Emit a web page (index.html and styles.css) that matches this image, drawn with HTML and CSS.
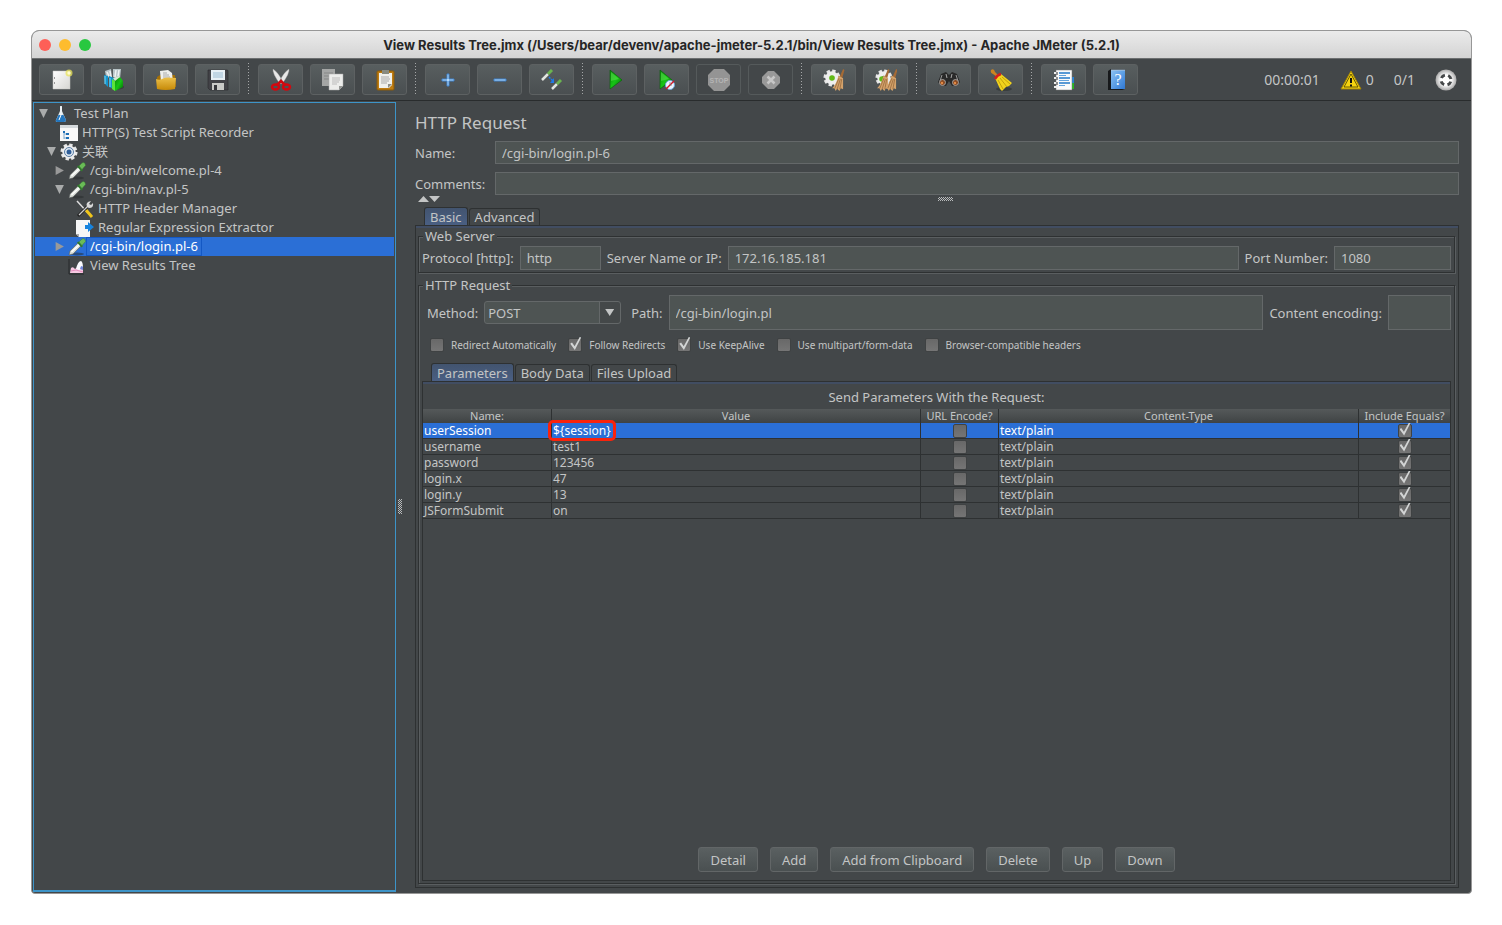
FILE: index.html
```html
<!DOCTYPE html>
<html lang="en">
<head>
    <meta charset="UTF-8">
    <meta name="viewport" content="width=device-width, initial-scale=1.0">
    <title>Apache JMeter</title>
    <link rel="stylesheet" href="styles.css">
</head>
<body>
    <!-- gradients and shapes shared by the icons -->
    <svg class="defs" width="0" height="0" aria-hidden="true">
        <defs>
            <linearGradient id="paper" x1="0" y1="0" x2="1" y2="1"><stop offset="0" stop-color="#fff"/><stop offset="1" stop-color="#d6d6d2"/></linearGradient>
            <linearGradient id="gold" x1="0" y1="0" x2="0" y2="1"><stop offset="0" stop-color="#ecc04a"/><stop offset="1" stop-color="#c68a08"/></linearGradient>
            <linearGradient id="green" x1="0" y1="0" x2="1" y2="1"><stop offset="0" stop-color="#0a8a0a"/><stop offset=".5" stop-color="#16c416"/><stop offset="1" stop-color="#066b06"/></linearGradient>
            <linearGradient id="blue" x1="0" y1="0" x2="1" y2="1"><stop offset="0" stop-color="#8cc4f4"/><stop offset="1" stop-color="#2f78d4"/></linearGradient>
            <radialGradient id="ball"><stop offset=".5" stop-color="#fff"/><stop offset="1" stop-color="#a8a8a8"/></radialGradient>
            <symbol id="gear" viewBox="0 0 20 20">
                <circle cx="10" cy="10" r="8" fill="none" stroke="#e6e6e6" stroke-width="3" stroke-dasharray="3.74 2.54"/>
                <circle cx="10" cy="10" r="5" fill="none" stroke="#eee" stroke-width="5"/>
            </symbol>
            <symbol id="broom" viewBox="0 0 14 24">
                <path d="M12 0L13.500 1L11 10L8 9Z" fill="#a56a35"/>
                <path d="M7 7L12 10L12 22L9.500 21L8 24L5.500 21.500L4 24L2.500 21L0 21Q5 16 7 7Z" fill="#d3a26b"/>
                <path d="M7.500 10L3 21M9 11L5.500 22M10.500 11L8.500 22" stroke="#8b5c30" stroke-width=".7" fill="none"/>
            </symbol>
            <symbol id="dropper" viewBox="0 0 18 18">
                <ellipse cx="9" cy="16" rx="7" ry="1.500" fill="#26292a" opacity=".5"/>
                <path d="M1 17L2 13L10 5L13 8L5 16Z" fill="#d7dcd5" stroke="#55595a" stroke-width=".6"/>
                <path d="M3.500 14L11 7" stroke="#fff" stroke-width="1.400"/>
                <path d="M9 4.500L10.500 3.500L15 8L13.500 9.500Z" fill="#307a2c"/>
                <path d="M11 4L14 1Q17-.5 17.500 3.500L14 7.500Z" fill="#6abb57" stroke="#3a8034" stroke-width=".5"/>
            </symbol>
        </defs>
    </svg>

    <div class="window">
        <header class="titlebar">
            <div class="lights"><span class="light red"></span><span class="light yellow"></span><span class="light green"></span></div>
            <h1>View Results Tree.jmx (/Users/bear/devenv/apache-jmeter-5.2.1/bin/View Results Tree.jmx) - Apache JMeter (5.2.1)</h1>
        </header>

        <div class="toolbar">
            <button class="tool" aria-label="New"><svg viewBox="0 0 22 22"><path d="M2 2H19V20H2Z" fill="url(#paper)" stroke="#c4c4c0" stroke-width=".5"/><circle cx="18" cy="4" r="3.500" fill="#eae45a" opacity=".75"/><circle cx="18" cy="4" r="1.700" fill="#fffbd0"/><path d="M3.500 8v2M3.500 13v2" stroke="#999"/></svg></button>
            <button class="tool" aria-label="Templates"><svg viewBox="0 0 22 22"><ellipse cx="15" cy="18" rx="6" ry="2.500" fill="#282b2c" opacity=".5"/><path d="M2 2L8 0L9 9L3 8ZM10 0L18 0L17 10L10 8Z" fill="#b9c5c8"/><path d="M4 3L6 7M7 2L8 8M13 1L12 8M16 1L15 7" stroke="#edf2f2" stroke-width="1.500"/><path d="M1 6L5 7V18L2 15ZM6 7L11 9V20L6 18Z" fill="#1594cc"/><path d="M2 7V15M7 9V18" stroke="#78dafa"/><path d="M9 10L12 12V22L9 20Z" fill="#5be43c"/><path d="M12 11L17 8L20 12V18L12 22Z" fill="url(#green)"/><path d="M10 9L16 7L17 8L12 12Z" fill="#d5e6d2"/></svg></button>
            <button class="tool" aria-label="Open"><svg viewBox="0 0 22 22"><path d="M2 8L5 6H20L21 18L2 19Z" fill="#a37008"/><path d="M5 2L13 1L17 4L18 13H6Z" fill="#eeefed"/><path d="M8 4H12M8 6H14M8 8H15" stroke="#aaa"/><path d="M1 10Q5 12 9 9Q11 8 21 9L20 20Q10 22 2 20Z" fill="url(#gold)"/></svg></button>
            <button class="tool" aria-label="Save"><svg viewBox="0 0 22 22"><path d="M1 1H20Q21 1 21 2V21H3L1 19Z" fill="#424247" stroke="#2a2a2d" stroke-width=".6"/><path d="M4 1H18V11H4Z" fill="#e8eff5"/><path d="M6 4H16M6 6H16M6 8H16" stroke="#9bbbd2"/><path d="M5 14H17V21H5Z" fill="#c9c9c7"/><path d="M7 16H10V21H7Z" fill="#35353a"/></svg></button>
            <span class="separator"></span>
            <button class="tool" aria-label="Cut"><svg viewBox="0 0 22 22"><path d="M3 0Q2 4 10 15L13 13Q8 3 3 0ZM19 0Q20 4 12 15L9 13Q14 3 19 0Z" fill="#e8e8e8" stroke="#999" stroke-width=".4"/><ellipse cx="5.500" cy="18" rx="3.500" ry="2.500" fill="none" stroke="#d4080e" stroke-width="2.500"/><ellipse cx="16.500" cy="18" rx="3.500" ry="2.500" fill="none" stroke="#d4080e" stroke-width="2.500"/><path d="M7 16L11 12L15 16" fill="none" stroke="#d4080e" stroke-width="2.500"/></svg></button>
            <button class="tool" aria-label="Copy"><svg viewBox="0 0 22 22"><path d="M0 0H13V17H0Z" fill="#a4a6a5"/><path d="M2 4H11M2 7H11M2 10H8" stroke="#858786"/><path d="M7 5H21V17L17 21H7Z" fill="#ecedeb" stroke="#aaa" stroke-width=".5"/><path d="M10 9H18M10 11H18M10 13H17M10 15H15" stroke="#bbb"/><path d="M21 17H17V21Z" fill="#949694"/></svg></button>
            <button class="tool" aria-label="Paste"><svg viewBox="0 0 22 22"><rect x="3" y="2" width="17" height="19" rx="1" fill="#bf7c11" stroke="#8a5a0a"/><path d="M5 4H18V16L15 19H5Z" fill="#f0f0ec"/><path d="M8 1H15V5H8Z" fill="#898b80"/><path d="M7 8H15M7 10H16M7 12H15M7 14H13" stroke="#aaa"/><path d="M18 15H14V19Z" fill="#8d8e86"/></svg></button>
            <span class="separator"></span>
            <button class="tool" aria-label="Expand All"><svg viewBox="0 0 22 22"><path d="M10 5H12V10H17V12H12V17H10V12H5V10H10Z" fill="#b4dafa" stroke="#3f82cc"/></svg></button>
            <button class="tool" aria-label="Collapse All"><svg viewBox="0 0 22 22"><path d="M5 10H17V12H5Z" fill="#b4dafa" stroke="#3f82cc"/></svg></button>
            <button class="tool" aria-label="Toggle"><svg viewBox="0 0 22 22"><path d="M1 11L7 5" stroke="#e2e5e0" stroke-width="2.500"/><path d="M7 5L11 1" stroke="#6ab450" stroke-width="3"/><path d="M11 20L16 15" stroke="#e2e5e0" stroke-width="2.500"/><path d="M16 15L20 11" stroke="#6ab450" stroke-width="3"/><path d="M8 8L12 12" stroke="#1f7ae8" stroke-width="1.500" stroke-dasharray="2 1"/><path d="M13 9V14H9Z" fill="#1f7ae8"/></svg></button>
            <span class="separator"></span>
            <button class="tool" aria-label="Start"><svg viewBox="0 0 22 22"><path d="M6 1L18 11L6 20Z" fill="url(#green)" stroke="#075f07" stroke-width=".6"/><path d="M7 3L15 10L7 12Z" fill="#55dc49" opacity=".6"/></svg></button>
            <button class="tool" aria-label="Start no pauses"><svg viewBox="0 0 22 22"><path d="M4 1L16 11L4 20Z" fill="url(#green)" stroke="#075f07" stroke-width=".6"/><path d="M5 3L13 10L5 12Z" fill="#55dc49" opacity=".6"/><circle cx="14" cy="16" r="4.500" fill="#eaf4ff" stroke="#6ba5d8"/><path d="M10 20L18 12" stroke="#d81424" stroke-width="1.500"/><path d="M14 13V16H16" stroke="#777" stroke-width=".7" fill="none"/></svg></button>
            <button class="tool disabled" aria-label="Stop" disabled><svg viewBox="0 0 22 22"><path d="M6 0H16L22 6V16L16 22H6L0 16V6Z" fill="#949494"/><text x="11" y="14" class="stop-text">STOP</text></svg></button>
            <button class="tool disabled" aria-label="Shutdown" disabled><svg viewBox="0 0 22 22"><path d="M8 2H14L20 8V14L14 20H8L2 14V8Z" fill="#999"/><path d="M7.500 7.500L14.500 14.500M14.500 7.500L7.500 14.500" stroke="#c7c7c7" stroke-width="2.500"/></svg></button>
            <span class="separator"></span>
            <button class="tool" aria-label="Clear"><svg viewBox="0 0 22 22"><use href="#gear" x="0" y="0" width="18" height="18"/><circle cx="9" cy="9" r="2.800" fill="#62ba18"/><use href="#broom" x="9" y="0" width="13" height="22"/></svg></button>
            <button class="tool" aria-label="Clear All"><svg viewBox="0 0 22 22"><use href="#gear" x="0" y="0" width="18" height="18"/><circle cx="7" cy="10" r="2.800" fill="#62ba18"/><use href="#broom" x="2" y="0" width="13" height="22"/><use href="#broom" x="10" y="0" width="13" height="22"/></svg></button>
            <span class="separator"></span>
            <button class="tool" aria-label="Search"><svg viewBox="0 0 22 22"><path d="M3 5L8 3L11 6L14 3L19 5L22 13L19 17H14L11 12L8 17H3L0 13Z" fill="#292929"/><path d="M4 6L2 12M18 6L20 12" stroke="#999"/><path d="M8 5L9 9M14 5L13 9" stroke="#aaa"/><circle cx="4.500" cy="13.500" r="3" fill="#8b4a20" stroke="#a0a0a0"/><circle cx="17.500" cy="13.500" r="3" fill="#8b4a20" stroke="#a0a0a0"/><circle cx="4" cy="14" r="1.200" fill="#e38b47"/><circle cx="17" cy="14" r="1.200" fill="#e38b47"/></svg></button>
            <button class="tool" aria-label="Reset Search"><svg viewBox="0 0 22 22"><ellipse cx="14" cy="20" rx="8" ry="2" fill="#282b2c" opacity=".5"/><path d="M1 1Q4-1 5 3L9 7L7 8L3 5Q0 4 1 1Z" fill="#cc8422"/><path d="M5 9L11 5L22 14L19 17L16 18L12 22L10 20Z" fill="#f1d31c"/><path d="M8 11L13 20M10 9L17 18M12 8L20 15" stroke="#b99507" stroke-width=".8"/><path d="M5 10Q7 6 11 5" fill="none" stroke="#d51e1e" stroke-width="2.500"/></svg></button>
            <span class="separator"></span>
            <button class="tool" aria-label="Function Helper"><svg viewBox="0 0 22 22"><path d="M15 8H21V14H15Z" fill="#2682d8"/><path d="M15 14H21V20H15Z" fill="#27b822"/><path d="M3 1H19V21H3Z" fill="#fafafa" stroke="#777" stroke-width=".5"/><path d="M6 4H17M6 9H17M6 14H17" stroke="#2479c8" stroke-width="1.500"/><path d="M6 6.500H13M6 11.500H16M6 16.500H12" stroke="#66a4dc"/><path d="M1 4H5M1 9H5M1 14H5M1 18H5" stroke="#eee" stroke-width="2"/><path d="M4 3V6M4 8V11M4 13V16" stroke="#333"/></svg></button>
            <button class="tool" aria-label="Help"><svg viewBox="0 0 22 22"><path d="M3 2L6 0H20V20L17 21H3Z" fill="#17191b"/><path d="M6 1H20V20H6Z" fill="url(#blue)"/><path d="M6 1H20" stroke="#b5c8d8"/><text x="13" y="16" class="help-text">?</text></svg></button>

            <div class="status">
                <span class="timer">00:00:01</span>
                <span class="warnings"><svg viewBox="0 0 22 20" width="22" height="20"><path d="M11 1L21 19H1Z" fill="#f7d410" stroke="#a08208" stroke-linejoin="round"/><path d="M11 4L18 17H4Z" fill="none" stroke="#453a00" stroke-width=".8"/><path d="M11 8V13M11 14.500V16.500" stroke="#111" stroke-width="2"/></svg>0</span>
                <span class="threads">0/1</span>
                <svg viewBox="0 0 22 22" width="22" height="22"><circle cx="11" cy="11" r="10.500" fill="url(#ball)"/><circle cx="11" cy="11" r="5" fill="none" stroke="#454849" stroke-width="3" stroke-dasharray="4.400 3.450" stroke-dashoffset="-1.700"/></svg>
            </div>
        </div>

        <main class="content">
            <nav class="tree" aria-label="Test plan">
                <ul>
                    <li class="node level-0"><span class="arrow down"></span><svg viewBox="0 0 18 18"><path d="M8 1H10V6L14 15Q14 17 12 17H6Q3 17 4 15L8 6Z" fill="#dbe5ea"/><path d="M6.500 10H11.500L14 15Q14 17 12 17H6Q3 17 4 15Z" fill="#2476bd"/><path d="M9 2V10L7 15" stroke="#fff" fill="none"/></svg><span class="label">Test Plan</span></li>
                    <li class="node level-1"><span class="arrow"></span><svg viewBox="0 0 18 18"><path d="M0 2H18V17H0Z" fill="#f8f8f8"/><path d="M0 1H18V4H0Z" fill="#d4d9dc"/><path d="M4 8V15M4 10H6M4 14H6" stroke="#7fa8cc" fill="none"/><path d="M3 7H5V9H3ZM6 9H9V11H6ZM6 13H9V15H6Z" fill="#1f6fb5"/></svg><span class="label">HTTP(S) Test Script Recorder</span></li>
                    <li class="node level-1"><span class="arrow down"></span><svg viewBox="0 0 18 18"><use href="#gear" width="18" height="18"/><circle cx="9" cy="9" r="4.500" fill="#dfe8f0" stroke="#5c7ea6"/><circle cx="9" cy="9" r="2.500" fill="#2e5d98"/></svg><span class="label">关联</span></li>
                    <li class="node level-2"><span class="arrow right"></span><svg><use href="#dropper"/></svg><span class="label">/cgi-bin/welcome.pl-4</span></li>
                    <li class="node level-2"><span class="arrow down"></span><svg><use href="#dropper"/></svg><span class="label">/cgi-bin/nav.pl-5</span></li>
                    <li class="node level-3"><span class="arrow"></span><svg viewBox="0 0 18 18"><path d="M1 1L12 13" stroke="#ddd" stroke-width="1.500"/><path d="M10 10L16 17" stroke="#efc51b" stroke-width="3"/><path d="M2 16L12 6" stroke="#222" stroke-width="3"/><path d="M3 15L12 6" stroke="#ccc" stroke-width="1.200"/><path d="M11 7Q9 2 15 1L13 4L15 5L17 3Q18 8 13 8Z" fill="#d8d8d8"/></svg><span class="label">HTTP Header Manager</span></li>
                    <li class="node level-3"><span class="arrow"></span><svg viewBox="0 0 18 18"><path d="M0 1H14V18H3L0 15Z" fill="#f6f6f6"/><path d="M0 15L3 18V15Z" fill="#aaa"/><path d="M9 6H12V3L18 8L12 13V10H9Z" fill="#1683de"/></svg><span class="label">Regular Expression Extractor</span></li>
                    <li class="node level-2 selected"><span class="arrow right"></span><svg><use href="#dropper"/></svg><span class="label">/cgi-bin/login.pl-6</span></li>
                    <li class="node level-2"><span class="arrow"></span><svg viewBox="0 0 18 18"><path d="M1 2V17H16" fill="none" stroke="#26292a"/><path d="M2 16L3 11Q5 9 7 12L11 9L15 11V16Z" fill="#f6c9e2"/><path d="M8 12Q10 4 13 4Q15 5 15 11L11 13Z" fill="#fafaff"/><path d="M12 12Q13 7 15 10V13Z" fill="#7185d8"/><path d="M3 14L8 13L15 15" stroke="#e58dbf" fill="none"/></svg><span class="label">View Results Tree</span></li>
                </ul>
            </nav>

            <div class="splitter"><span class="grip vertical"></span></div>

            <section class="editor">
                <h2>HTTP Request</h2>
                <div class="info">
                    <label for="name">Name:</label>
                    <input id="name" type="text" value="/cgi-bin/login.pl-6">
                    <label for="comments">Comments:</label>
                    <input id="comments" type="text">
                </div>
                <div class="divider"><span class="up"></span><span class="dn"></span><span class="grip horizontal"></span></div>

                <div class="tabs">
                    <button class="tab active">Basic</button>
                    <button class="tab">Advanced</button>
                </div>
                <div class="pane">
                    <fieldset>
                        <legend>Web Server</legend>
                        <div class="row server">
                            <label for="protocol">Protocol [http]:</label>
                            <input id="protocol" class="protocol" type="text" value="http">
                            <label for="server">Server Name or IP:</label>
                            <input id="server" class="grow" type="text" value="172.16.185.181">
                            <label for="port">Port Number:</label>
                            <input id="port" class="port" type="text" value="1080">
                        </div>
                    </fieldset>

                    <fieldset class="request">
                        <legend>HTTP Request</legend>
                        <div class="row method-row">
                            <label for="method">Method:</label>
                            <span class="combo"><select id="method"><option>POST</option><option>GET</option></select></span>
                            <label for="path">Path:</label>
                            <input id="path" class="grow" type="text" value="/cgi-bin/login.pl">
                            <label for="encoding">Content encoding:</label>
                            <input id="encoding" class="encoding" type="text">
                        </div>
                        <div class="checks">
                            <label><input type="checkbox">Redirect Automatically</label>
                            <label><input type="checkbox" checked>Follow Redirects</label>
                            <label><input type="checkbox" checked>Use KeepAlive</label>
                            <label><input type="checkbox">Use multipart/form-data</label>
                            <label><input type="checkbox">Browser-compatible headers</label>
                        </div>

                        <div class="tabs inner">
                            <button class="tab active">Parameters</button>
                            <button class="tab">Body Data</button>
                            <button class="tab">Files Upload</button>
                        </div>
                        <div class="pane params">
                            <table>
                                <caption>Send Parameters With the Request:</caption>
                                <colgroup><col class="c-name"><col><col class="c-encode"><col class="c-type"><col class="c-equals"></colgroup>
                                <thead>
                                    <tr><th>Name:</th><th>Value</th><th>URL Encode?</th><th>Content-Type</th><th>Include Equals?</th></tr>
                                </thead>
                                <tbody>
                                    <tr class="selected"><td>userSession</td><td><span class="marked">${session}</span></td><td class="tick"><input type="checkbox" aria-label="URL Encode"></td><td>text/plain</td><td class="tick"><input type="checkbox" aria-label="Include Equals" checked></td></tr>
                                    <tr><td>username</td><td>test1</td><td class="tick"><input type="checkbox" aria-label="URL Encode"></td><td>text/plain</td><td class="tick"><input type="checkbox" aria-label="Include Equals" checked></td></tr>
                                    <tr><td>password</td><td>123456</td><td class="tick"><input type="checkbox" aria-label="URL Encode"></td><td>text/plain</td><td class="tick"><input type="checkbox" aria-label="Include Equals" checked></td></tr>
                                    <tr><td>login.x</td><td>47</td><td class="tick"><input type="checkbox" aria-label="URL Encode"></td><td>text/plain</td><td class="tick"><input type="checkbox" aria-label="Include Equals" checked></td></tr>
                                    <tr><td>login.y</td><td>13</td><td class="tick"><input type="checkbox" aria-label="URL Encode"></td><td>text/plain</td><td class="tick"><input type="checkbox" aria-label="Include Equals" checked></td></tr>
                                    <tr><td>JSFormSubmit</td><td>on</td><td class="tick"><input type="checkbox" aria-label="URL Encode"></td><td>text/plain</td><td class="tick"><input type="checkbox" aria-label="Include Equals" checked></td></tr>
                                </tbody>
                            </table>
                            <div class="actions">
                                <button>Detail</button>
                                <button>Add</button>
                                <button>Add from Clipboard</button>
                                <button>Delete</button>
                                <button>Up</button>
                                <button>Down</button>
                            </div>
                        </div>
                    </fieldset>
                </div>
            </section>
        </main>
    </div>
</body>
</html>
```
FILE: styles.css
```css
* {
    box-sizing: border-box;
}
body {
    margin: 0;
    padding: 30px 30px 31px 31px;
    min-height: 100vh;
    display: flex;
    background: #fff;
    color: #c3c5c5;
    font-family: "Noto Sans", "Noto Sans CJK SC", sans-serif;
    font-size: 13px;
    line-height: 16px;
}
button, input, select {
    font: inherit;
    color: inherit;
    margin: 0;
}
.defs {
    position: absolute;
}
.window {
    flex: 1;
    min-width: 0;
    display: flex;
    flex-direction: column;
    border: 1px solid #979797;
    border-radius: 8px 8px 4px 4px;
    background: #434749;
    overflow: hidden;
}

/* title bar */
.titlebar {
    display: grid;
    grid-template-columns: 1fr auto 1fr;
    align-items: center;
    height: 27px;
    padding: 0 7px;
    background: linear-gradient(#ebebeb, #d4d4d4);
}
.titlebar h1 {
    margin: 0;
    font: 700 13px/16px Inter, sans-serif;
    color: #262626;
    white-space: nowrap;
}
.lights {
    display: flex;
    gap: 8px;
}
.light {
    width: 12px;
    height: 12px;
    border-radius: 50%;
}
.red {
    background: #fe5f57;
}
.yellow {
    background: #febc2e;
}
.green {
    background: #28c840;
}

/* toolbar */
.toolbar {
    display: flex;
    align-items: center;
    gap: 7px;
    height: 43px;
    padding: 0 14px 0 7px;
    border-top: 1px solid #6c6f70;
    border-bottom: 1px solid #292c2d;
}
.tool {
    display: flex;
    align-items: center;
    justify-content: center;
    width: 45px;
    height: 31px;
    padding: 0;
    border: 1px solid #5d6162;
    border-radius: 3px;
    background: linear-gradient(#585e5f, #4a4f51);
}
.tool.disabled {
    background: none;
    border-color: #555a5b;
}
.tool svg {
    width: 22px;
    height: 22px;
}
.stop-text {
    font: 700 7px "Liberation Sans", sans-serif;
    fill: #b4b4b4;
    text-anchor: middle;
}
.help-text {
    font: 16px "Liberation Serif", serif;
    fill: #fff;
    text-anchor: middle;
}
.separator {
    width: 4px;
    height: 33px;
    background: repeating-linear-gradient(#a5a7a8 0 1px, transparent 1px 3px) 1px 0 / 1px 100% no-repeat;
}
.status {
    display: flex;
    align-items: center;
    gap: 20px;
    margin-left: auto;
    font-size: 14px;
}
.warnings {
    display: flex;
    align-items: center;
    gap: 4px;
}

/* test plan tree */
.content {
    flex: 1;
    min-height: 0;
    display: flex;
}
.tree {
    flex: 0 0 363px;
    margin: 1px 0 1px 1px;
    border: 1px solid #3d94c8;
    border-bottom-width: 2px;
}
.tree ul {
    list-style: none;
    margin: 0;
    padding: 1px;
}
.node {
    display: flex;
    align-items: center;
    height: 19px;
}
.node svg {
    width: 18px;
    height: 18px;
    margin: 0 1px 0 3px;
}
.node .label {
    padding: 0 3px;
    line-height: 17px;
}
.level-0 {
    padding-left: 3px;
}
.level-1 {
    padding-left: 11px;
}
.level-2 {
    padding-left: 19px;
}
.level-3 {
    padding-left: 27px;
}
.node.selected {
    background: #2b6fd6;
    color: #fff;
}
.node.selected .label {
    outline: 1px solid #1458c4;
}
.arrow {
    width: 11px;
    height: 9px;
}
.arrow.down {
    background: #a9abab;
    clip-path: polygon(10% 0, 90% 0, 50% 100%);
}
.arrow.right {
    background: #999;
    clip-path: polygon(15% 0, 90% 50%, 15% 100%);
}
.splitter {
    width: 8px;
    padding-top: 18px;
    display: flex;
    align-items: center;
    justify-content: center;
}
.grip {
    background: repeating-conic-gradient(#b8babb 0 25%, transparent 0 50%) 0 0 / 2px 2px;
}
.grip.vertical {
    width: 4px;
    height: 15px;
}
.grip.horizontal {
    width: 15px;
    height: 4px;
    margin: 0 auto;
}

/* sampler editor */
.editor {
    flex: 1;
    min-width: 0;
    display: flex;
    flex-direction: column;
    padding: 10px 12px 5px 11px;
}
.editor h2 {
    margin: 0 0 6px;
    font-size: 17px;
    font-weight: 400;
    line-height: 24px;
}
.info {
    display: grid;
    grid-template-columns: 80px 1fr;
    row-gap: 8px;
    align-items: center;
}
input[type="text"] {
    height: 23px;
    min-width: 0;
    padding: 0 6px;
    border: 1px solid #646869;
    background: #4e5453;
}
.divider {
    display: flex;
    align-items: center;
    height: 8px;
    margin-bottom: 1px;
    padding: 0 8px 0 3px;
}
.up, .dn {
    width: 11px;
    height: 6px;
    background: #c3c5c5;
}
.up {
    clip-path: polygon(0 100%, 50% 0, 100% 100%);
}
.dn {
    clip-path: polygon(0 0, 100% 0, 50% 100%);
}
.tabs {
    display: flex;
    gap: 1px;
    align-items: flex-end;
    height: 21px;
    padding-left: 9px;
}
.tab {
    height: 17px;
    padding: 0 5px;
    border: 1px solid #2e3132;
    border-bottom: 0;
    border-radius: 3px 3px 0 0;
    background: #434749;
    line-height: 17px;
}
.tab.active {
    height: 18px;
    background: linear-gradient(#42546f, #4a5f83);
    line-height: 16px;
}
.pane {
    flex: 1;
    display: flex;
    flex-direction: column;
    border: 1px solid #2e3132;
    box-shadow: inset 0 2px #414d62;
    padding: 2px;
}
fieldset {
    margin: 0 1px 0 0;
    min-width: 0;
    padding: 2px 3px;
    border: 1px solid #2e3132;
    box-shadow: inset 1px 1px #5a5e60, 1px 1px #5a5e60;
}
legend {
    margin-left: 1px;
    padding: 0 2px;
    background: #434749;
}
.row {
    display: flex;
    align-items: center;
    gap: 6px;
}
.row input[type="text"] {
    height: 24px;
}
.grow {
    flex: 1;
}
.protocol {
    width: 81px;
}
.port {
    width: 117px;
}
.request {
    flex: 1;
    display: flex;
    flex-direction: column;
    margin-top: 4px;
    margin-bottom: 1px;
}
.method-row {
    padding-left: 5px;
}
.row.method-row input[type="text"] {
    height: 35px;
}
.row .encoding {
    width: 63px;
}
.combo {
    position: relative;
    margin-right: 4px;
}
.combo select {
    display: block;
    appearance: none;
    width: 137px;
    height: 23px;
    padding: 0 3px;
    border: 1px solid #646869;
    border-radius: 3px;
    background: linear-gradient(to right, #4e5453 114px, #646869 114px 115px, #444849 115px);
}
.combo::after {
    content: "";
    position: absolute;
    top: 8px;
    right: 7px;
    width: 9px;
    height: 7px;
    background: #c3c5c5;
    clip-path: polygon(0 0, 100% 0, 50% 100%);
    pointer-events: none;
}
.checks {
    display: flex;
    gap: 12px;
    padding: 7px 0 7px 8px;
    font-size: 10px;
}
.checks label {
    display: flex;
    align-items: center;
    gap: 7px;
}
input[type="checkbox"] {
    appearance: none;
    display: block;
    position: relative;
    width: 14px;
    height: 14px;
    border: 1px solid #3f4243;
    border-radius: 2px;
    background: linear-gradient(#686868, #757575);
}
input[type="checkbox"]:checked::after {
    content: "";
    position: absolute;
    inset: -2px 0 1px 1px;
    background: #d2d4d4;
    clip-path: polygon(0 52%, 16% 42%, 40% 72%, 86% 0, 100% 4%, 42% 100%);
}
.pane.params {
    padding: 2px 0 8px;
}
table {
    width: 100%;
    table-layout: fixed;
    border-collapse: separate;
    border-spacing: 0;
}
caption {
    padding: 5px 0 4px;
}
.c-name {
    width: 129px;
}
.c-encode {
    width: 78px;
}
.c-type {
    width: 360px;
}
.c-equals {
    width: 91px;
}
th, td {
    padding: 0 1px;
    border-right: 1px solid #2e3132;
    white-space: nowrap;
}
th {
    height: 14px;
    font-size: 11px;
    font-weight: 400;
    line-height: 14px;
    background: linear-gradient(#55595a, #3f4344);
}
td {
    height: 16px;
    font-size: 12px;
    line-height: 15px;
    border-bottom: 1px solid #2e3132;
}
th:last-child, td:last-child {
    border-right: 0;
}
tr.selected td {
    background: #2b6fd6;
    color: #fff;
}
.tick input {
    margin: 0 auto;
}
.marked {
    position: relative;
}
.marked::after {
    content: "";
    position: absolute;
    inset: -2px -5px;
    border: 3px solid #f9230c;
    border-radius: 5px;
}
.actions {
    display: flex;
    justify-content: center;
    gap: 12px;
    margin-top: auto;
}
.actions button {
    height: 25px;
    padding: 0 11px;
    border: 1px solid #626667;
    border-radius: 3px;
    background: linear-gradient(#5a6061, #4a5051);
}
```
